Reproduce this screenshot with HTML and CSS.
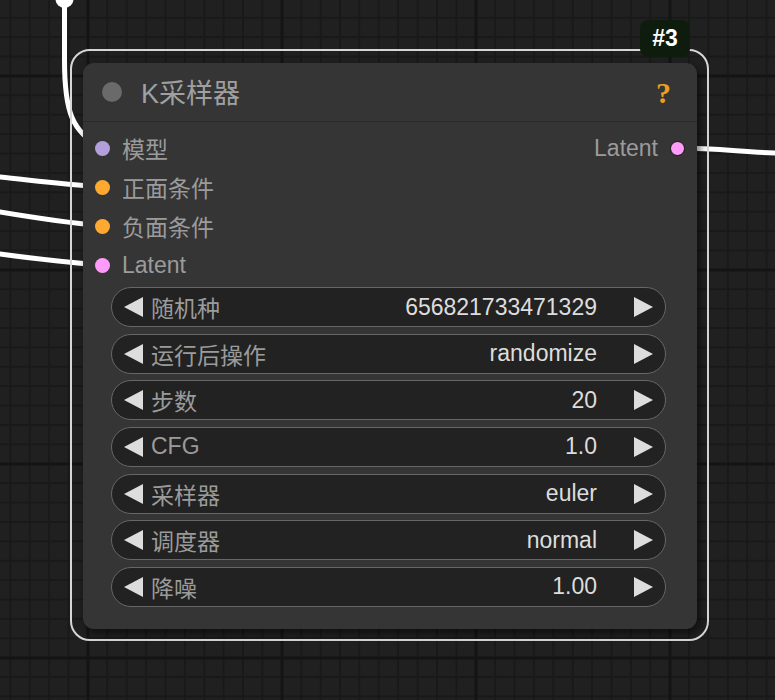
FILE: index.html
```html
<!DOCTYPE html>
<html>
<head>
<meta charset="utf-8">
<link rel="stylesheet" href="styles.css">
</head>
<body>
<div class="canvas">
  <svg class="wires" width="775" height="700" viewBox="0 0 775 700">
    <circle cx="64.5" cy="-1" r="9" fill="#fff"/>
    <path d="M64.5 5 L64.5 60 C64.5 112 72 132 102 148" />
    <path d="M0 177 C30 180 60 184 102 187" />
    <path d="M0 212 C30 217 60 222 102 226" />
    <path d="M0 254 C30 258 60 262 102 265" />
    <path d="M677 148 C720 148 740 152 775 153" />
  </svg>

  <div class="outline"></div>

  <div class="node">
    <div class="node-title">
      <span class="title-dot"></span>
      <span class="title-text">K采样器</span>
      <span class="help">?</span>
    </div>
    <div class="node-body">
      <div class="slots">
        <div class="slot-row">
          <div class="slot in"><span class="dot model"></span><span class="slot-label">模型</span></div>
          <div class="slot out"><span class="slot-label">Latent</span><span class="dot latent ring"></span></div>
        </div>
        <div class="slot-row">
          <div class="slot in"><span class="dot cond"></span><span class="slot-label">正面条件</span></div>
        </div>
        <div class="slot-row">
          <div class="slot in"><span class="dot cond"></span><span class="slot-label">负面条件</span></div>
        </div>
        <div class="slot-row">
          <div class="slot in"><span class="dot latent"></span><span class="slot-label">Latent</span></div>
        </div>
      </div>
      <div class="widgets">
        <div class="widget"><span class="arrow left"></span><span class="w-label">随机种</span><span class="w-value">656821733471329</span><span class="arrow right"></span></div>
        <div class="widget"><span class="arrow left"></span><span class="w-label">运行后操作</span><span class="w-value">randomize</span><span class="arrow right"></span></div>
        <div class="widget"><span class="arrow left"></span><span class="w-label">步数</span><span class="w-value">20</span><span class="arrow right"></span></div>
        <div class="widget"><span class="arrow left"></span><span class="w-label">CFG</span><span class="w-value">1.0</span><span class="arrow right"></span></div>
        <div class="widget"><span class="arrow left"></span><span class="w-label">采样器</span><span class="w-value">euler</span><span class="arrow right"></span></div>
        <div class="widget"><span class="arrow left"></span><span class="w-label">调度器</span><span class="w-value">normal</span><span class="arrow right"></span></div>
        <div class="widget"><span class="arrow left"></span><span class="w-label">降噪</span><span class="w-value">1.00</span><span class="arrow right"></span></div>
      </div>
    </div>
  </div>

  <div class="badge">#3</div>
</div>
</body>
</html>
```

FILE: styles.css
```css
html, body {
  margin: 0;
  padding: 0;
  background: #202020;
}

.canvas {
  position: relative;
  width: 775px;
  height: 700px;
  overflow: hidden;
  font-family: "Liberation Sans", Arial, "Noto Sans CJK SC", sans-serif;
  background-color: #202020;
  background-image:
    linear-gradient(to right, #141414 3px, transparent 3px),
    linear-gradient(to bottom, #141414 3px, transparent 3px),
    linear-gradient(to right, #191919 2px, transparent 2px),
    linear-gradient(to bottom, #191919 2px, transparent 2px);
  background-size: 194px 100%, 100% 194px, 19.4px 100%, 100% 19.4px;
  background-position: 86.5px 0, 0 74.5px, 9.4px 0, 0 16.8px;
}

.wires {
  position: absolute;
  left: 0;
  top: 0;
}

.wires path {
  fill: none;
  stroke: #ffffff;
  stroke-width: 5;
  stroke-linecap: round;
}

.outline {
  position: absolute;
  left: 70px;
  top: 49px;
  width: 635px;
  height: 588px;
  border: 2px solid #d6d6d6;
  border-radius: 20px;
}

.node {
  position: absolute;
  left: 83px;
  top: 63px;
  width: 614px;
  height: 566px;
  background: #353535;
  border-radius: 11px;
  box-shadow: 3px 4px 8px rgba(0, 0, 0, 0.55);
  display: flex;
  flex-direction: column;
}

.node-title {
  height: 58px;
  border-bottom: 1px solid #2b2b2b;
  display: flex;
  align-items: center;
  padding: 0 0 0 19px;
  box-sizing: content-box;
}

.title-dot {
  width: 20px;
  height: 20px;
  border-radius: 50%;
  background: #6a6a6a;
  flex: none;
  margin-top: -1px;
}

.title-text {
  margin-left: 19px;
  font-size: 27px;
  color: #a0a0a0;
  flex: 1;
  margin-top: -1px;
}

.help {
  font-family: "Liberation Serif", serif;
  font-weight: bold;
  font-size: 30px;
  color: #ec9f1f;
  margin-right: 26px;
  margin-top: 2px;
}

.node-body {
  padding: 6.5px 0 0 0;
  display: flex;
  flex-direction: column;
}

.slots {
  display: flex;
  flex-direction: column;
}

.slot-row {
  height: 39px;
  display: flex;
  align-items: center;
  justify-content: space-between;
}

.slot {
  display: flex;
  align-items: center;
  gap: 12px;
}

.slot.in {
  padding-left: 12px;
}

.slot.out {
  padding-right: 12px;
}

.slot-label {
  font-size: 23px;
  color: #9b9b9b;
}

.dot {
  width: 15px;
  height: 15px;
  border-radius: 50%;
  flex: none;
}

.dot.model { background: #b49fdd; }
.dot.cond { background: #ffa931; }
.dot.latent { background: #ff9cf9; }
.dot.ring {
  width: 13px;
  height: 13px;
  border: 1.5px solid #111;
}

.widgets {
  margin: 2.5px 31px 0 28px;
  display: flex;
  flex-direction: column;
  gap: 6.67px;
}

.widget {
  height: 40px;
  box-sizing: border-box;
  border: 1.5px solid #676767;
  border-radius: 20px;
  background: #222222;
  display: flex;
  align-items: center;
  padding: 0 12px 0 12px;
  font-size: 23px;
}

.arrow {
  width: 0;
  height: 0;
  border-top: 10px solid transparent;
  border-bottom: 10px solid transparent;
  flex: none;
}

.arrow.left {
  border-right: 19px solid #dddddd;
}

.arrow.right {
  border-left: 19px solid #dddddd;
  margin-left: 37px;
}

.w-label {
  color: #9b9b9b;
  margin-left: 8px;
  flex: 1;
}

.w-value {
  color: #dddddd;
}

.badge {
  position: absolute;
  left: 640px;
  top: 20px;
  width: 50px;
  height: 37px;
  border-radius: 8px;
  background: #0e1c0e;
  color: #ffffff;
  font-size: 23px;
  font-weight: bold;
  display: flex;
  align-items: center;
  justify-content: center;
}
```
